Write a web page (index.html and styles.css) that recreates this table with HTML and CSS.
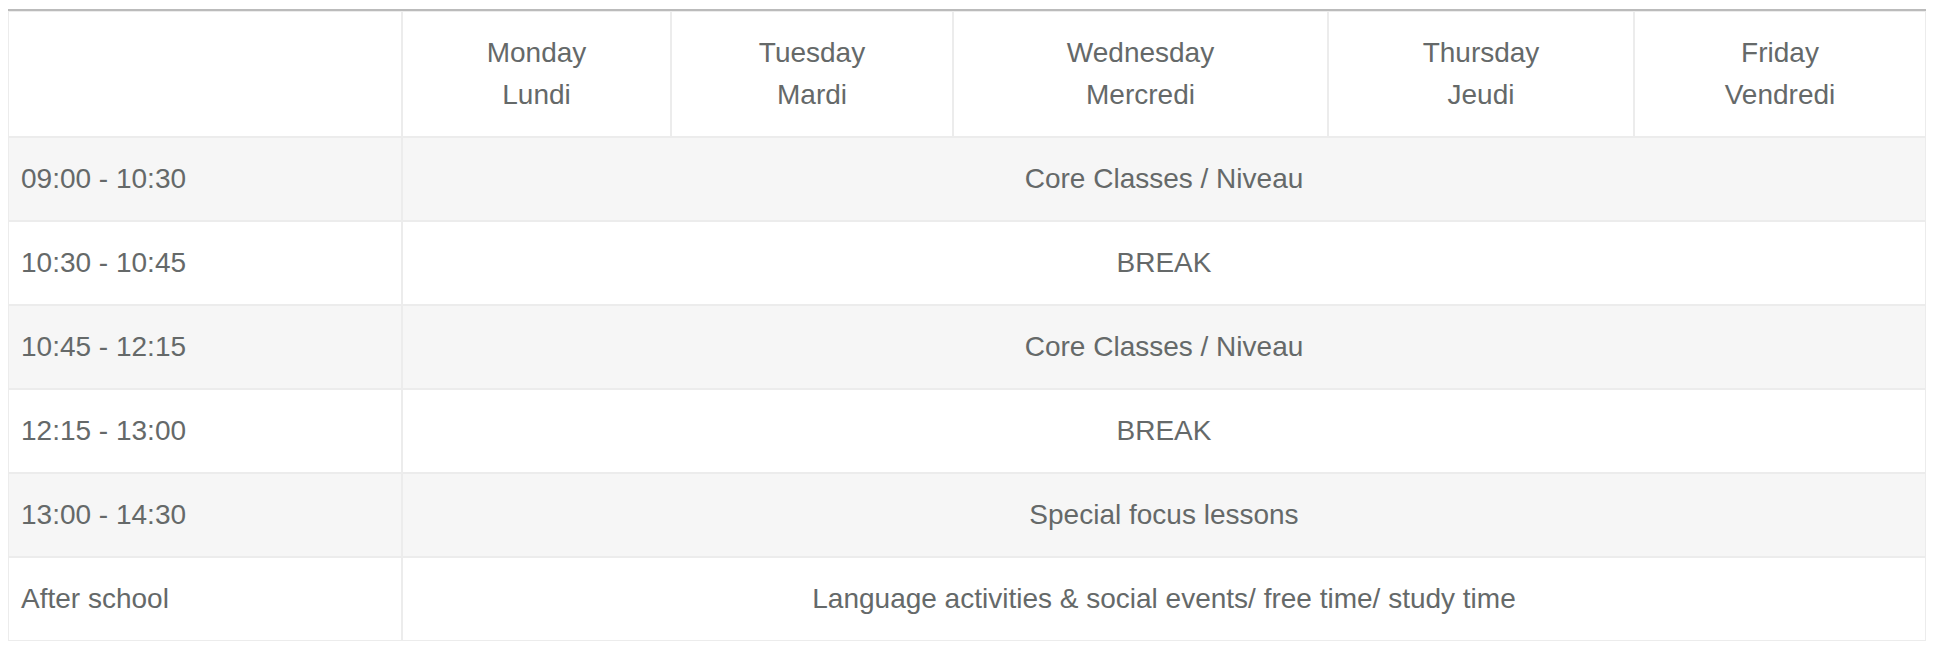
FILE: index.html
```html
<!DOCTYPE html>
<html lang="en">
<head>
<meta charset="utf-8">
<title>Timetable</title>
<link rel="stylesheet" href="styles.css">
</head>
<body>
<table class="schedule">
  <colgroup>
    <col class="c-time">
    <col class="c-mon">
    <col class="c-tue">
    <col class="c-wed">
    <col class="c-thu">
    <col class="c-fri">
  </colgroup>
  <thead>
    <tr>
      <th></th>
      <th>Monday<br>Lundi</th>
      <th>Tuesday<br>Mardi</th>
      <th>Wednesday<br>Mercredi</th>
      <th>Thursday<br>Jeudi</th>
      <th>Friday<br>Vendredi</th>
    </tr>
  </thead>
  <tbody>
    <tr class="odd"><td class="time">09:00 - 10:30</td><td class="span" colspan="5">Core Classes / Niveau</td></tr>
    <tr><td class="time">10:30 - 10:45</td><td class="span" colspan="5">BREAK</td></tr>
    <tr class="odd"><td class="time">10:45 - 12:15</td><td class="span" colspan="5">Core Classes / Niveau</td></tr>
    <tr><td class="time">12:15 - 13:00</td><td class="span" colspan="5">BREAK</td></tr>
    <tr class="odd"><td class="time">13:00 - 14:30</td><td class="span" colspan="5">Special focus lessons</td></tr>
    <tr><td class="time">After school</td><td class="span" colspan="5">Language activities &amp; social events/ free time/ study time</td></tr>
  </tbody>
</table>
</body>
</html>
```

FILE: styles.css
```css
html, body {
  background: #ffffff;
}
body {
  margin: 9px 8px 8px;
  font-family: "Liberation Sans", Arial, sans-serif;
  color: #656969;
}
.schedule {
  width: 100%;
  table-layout: fixed;
  border-collapse: separate;
  border-spacing: 0;
  border-top: 2px solid #bbbbbb;
  font-size: 28px;
  line-height: 42px;
}
.c-time { width: 394px; }
.c-mon { width: 269px; }
.c-tue { width: 282px; }
.c-wed { width: 375px; }
.c-thu { width: 306px; }
.c-fri { width: 292px; }
.schedule th,
.schedule td {
  border: 1px solid #ececec;
  padding: 20px 12px;
  font-weight: normal;
  box-sizing: border-box;
}
.schedule th {
  text-align: center;
  background: #ffffff;
}
.schedule td.time {
  text-align: left;
}
.schedule td.span {
  text-align: center;
}
.schedule tr.odd td {
  background: #f6f6f6;
}
```
